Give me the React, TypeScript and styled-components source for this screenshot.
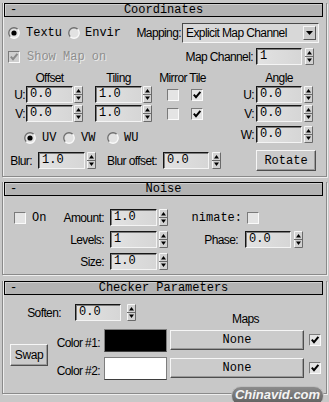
import styled, { createGlobalStyle } from "styled-components";

const GlobalStyle = createGlobalStyle`
  html, body {
    margin: 0;
    padding: 0;
    background: #c8c8c8;
  }
  body {
    width: 329px;
    height: 402px;
    overflow: hidden;
  }
`;

const Page = styled.div`
  position: relative;
  width: 329px;
  height: 402px;
  overflow: hidden;
  background: #c8c8c8;
  color: #000;
  font-family: "Liberation Sans", Arial, sans-serif;
`;

const Rollout = styled.section<{ $mt: number; $pb: number }>`
  width: 325px;
  box-sizing: border-box;
  margin: ${(p) => p.$mt}px 0 0 2px;
  padding-bottom: ${(p) => p.$pb}px;
  border: 1px solid #8a8a8a;
  border-top: none;
  box-shadow: 1px 1px 0 #eeeeee, inset 1px 0 0 #eeeeee;
`;

const Header = styled.div`
  display: flex;
  align-items: center;
  height: 14px;
  box-sizing: border-box;
  margin: 3px 3px 0 1px;
  border: 1px solid #000;
  background: #b3b3b3;
  box-shadow: inset 1px 1px 0 #cfcfcf;
  font-family: "Liberation Mono", monospace;
  font-size: 12px;
  line-height: 12px;
`;

const Minus = styled.span`
  width: 10px;
  padding-left: 5px;
`;

const Title = styled.span`
  flex: 1;
  text-align: center;
  margin-right: 15px;
`;

const Row = styled.div<{ $mt: number; $h: number }>`
  display: flex;
  align-items: center;
  margin-top: ${(p) => p.$mt}px;
  height: ${(p) => p.$h}px;
`;

const Label = styled.span<{ $w?: number; $ml?: number; $align?: string }>`
  flex: none;
  width: ${(p) => (p.$w ? `${p.$w}px` : "auto")};
  margin-left: ${(p) => p.$ml ?? 0}px;
  text-align: ${(p) => p.$align ?? "right"};
  font-size: 12px;
  letter-spacing: -0.6px;
  line-height: 14px;
  white-space: nowrap;
`;

const Mono = styled.span<{ $w?: number; $ml?: number; $off?: boolean; $align?: string }>`
  flex: none;
  width: ${(p) => (p.$w ? `${p.$w}px` : "auto")};
  margin-left: ${(p) => p.$ml ?? 0}px;
  text-align: ${(p) => p.$align ?? "left"};
  font-family: "Liberation Mono", monospace;
  font-size: 12px;
  line-height: 14px;
  white-space: nowrap;
  color: ${(p) => (p.$off ? "#8e8e8e" : "#000")};
  text-shadow: ${(p) => (p.$off ? "1px 1px 0 #ececec" : "none")};
`;

const Field = styled.div<{ $w: number; $ml?: number }>`
  flex: none;
  box-sizing: border-box;
  width: ${(p) => p.$w}px;
  height: 17px;
  margin-left: ${(p) => p.$ml ?? 0}px;
  padding-left: 3px;
  background: linear-gradient(90deg, #e2e2e2, #d6d6d6);
  border-top: 1px solid #161616;
  border-left: 1px solid #161616;
  border-right: 1px solid #f4f4f4;
  border-bottom: 1px solid #f4f4f4;
  box-shadow: inset 1px 1px 0 #7c7c7c;
  font-family: "Liberation Mono", monospace;
  font-size: 12px;
  line-height: 15px;
`;

const SpinBox = styled.span<{ $ml: number }>`
  flex: none;
  display: flex;
  width: 9px;
  height: 17px;
  margin-left: ${(p) => p.$ml}px;
`;

const Dropdown = styled.div<{ $w: number; $ml: number }>`
  flex: none;
  display: flex;
  align-items: center;
  box-sizing: border-box;
  width: ${(p) => p.$w}px;
  height: 20px;
  margin-left: ${(p) => p.$ml}px;
  padding-left: 3px;
  background: #d8d8d8;
  border-top: 1px solid #4a4a4a;
  border-left: 1px solid #4a4a4a;
  border-right: 1px solid #f6f6f6;
  border-bottom: 1px solid #f6f6f6;
  font-size: 12px;
  letter-spacing: -0.6px;
`;

const DropText = styled.span`
  flex: 1;
  white-space: nowrap;
`;

const DropArrow = styled.span`
  display: flex;
  align-items: center;
  justify-content: center;
  box-sizing: border-box;
  width: 13px;
  height: 14px;
  margin-right: 2px;
  background: #cbcbcb;
  border-top: 1px solid #f4f4f4;
  border-left: 1px solid #f4f4f4;
  border-right: 1px solid #555;
  border-bottom: 1px solid #555;
`;

const Box = styled.span<{ $ml: number; $off?: boolean }>`
  flex: none;
  display: flex;
  box-sizing: border-box;
  width: 12px;
  height: 12px;
  margin-left: ${(p) => p.$ml}px;
  background: ${(p) => (p.$off ? "#cfcfcf" : "#e4e4e4")};
  border-top: 1px solid #7a7a7a;
  border-left: 1px solid #7a7a7a;
  border-right: 1px solid #fafafa;
  border-bottom: 1px solid #fafafa;
`;

const RadioMark = styled.span<{ $ml: number }>`
  flex: none;
  display: flex;
  width: 12px;
  height: 12px;
  margin-left: ${(p) => p.$ml}px;
`;

const RadioGroup = styled.div`
  flex: none;
  display: flex;
  align-items: center;
  align-self: flex-end;
  width: 136px;
  height: 14px;
  margin: 0 0 -2px 21px;
`;

const Option = styled.span<{ $w: number }>`
  flex: none;
  display: flex;
  align-items: center;
  width: ${(p) => p.$w}px;
`;

const Button = styled.div<{ $w: number; $h: number; $ml?: number; $sans?: boolean }>`
  flex: none;
  display: flex;
  align-items: center;
  justify-content: center;
  box-sizing: border-box;
  width: ${(p) => p.$w}px;
  height: ${(p) => p.$h}px;
  margin-left: ${(p) => p.$ml ?? 0}px;
  background: #cbcbcb;
  border-top: 1px solid #f6f6f6;
  border-left: 1px solid #f6f6f6;
  border-right: 1px solid #4e4e4e;
  border-bottom: 1px solid #4e4e4e;
  box-shadow: inset -1px -1px 0 #9a9a9a;
  font-family: ${(p) =>
    p.$sans ? `"Liberation Sans", Arial, sans-serif` : `"Liberation Mono", monospace`};
  font-size: 12px;
  letter-spacing: ${(p) => (p.$sans ? "-0.4px" : "0")};
`;

const Columns = styled.div`
  display: flex;
`;

const LeftCol = styled.div`
  flex: none;
  width: 167px;
`;

const RightCol = styled.div`
  flex: none;
  width: 153px;
`;

const ColorBlock = styled.div`
  display: flex;
  align-items: center;
  margin-top: 8px;
`;

const ColorGrid = styled.div`
  display: grid;
  grid-template-columns: 52px 63px;
  column-gap: 4px;
  row-gap: 5px;
`;

const ColorLabel = styled.span`
  align-self: center;
  padding-top: 5px;
  text-align: right;
  font-size: 12px;
  letter-spacing: -0.6px;
  white-space: nowrap;
`;

const Swatch = styled.div<{ $color: string }>`
  box-sizing: border-box;
  height: 23px;
  background: ${(p) => p.$color};
  border: 1px solid #7e7e7e;
  border-bottom-color: #3e3e3e;
`;

const MapsTitle = styled.div`
  margin-top: 19px;
  width: 151px;
  height: 11px;
  text-align: center;
  font-size: 12px;
  letter-spacing: -0.6px;
  line-height: 11px;
`;

const MapRow = styled.div<{ $mt: number }>`
  display: flex;
  align-items: center;
  margin-top: ${(p) => p.$mt}px;
`;

const Watermark = styled.div`
  position: absolute;
  left: 231px;
  top: 386px;
  width: 93px;
  height: 20px;
  box-sizing: border-box;
  padding-bottom: 4px;
  display: flex;
  align-items: center;
  justify-content: center;
  border-radius: 10px;
  border: 1px solid #bdbdbd;
  background: linear-gradient(#8c8c8c, #5c5c5c);
  color: #f4f4f4;
  font-family: "Liberation Sans", Arial, sans-serif;
  font-size: 13px;
  font-style: italic;
  font-weight: bold;
`;

function Spin({ ml }: { ml: number }) {
  return (
    <SpinBox $ml={ml}>
      <svg width="9" height="17" viewBox="0 0 9 17">
        <rect x="0" y="0" width="9" height="17" fill="#d2d2d2" />
        <path d="M0.5 16.5 V0.5 H8.5" stroke="#f6f6f6" fill="none" />
        <path d="M8.5 0.5 V16.5 H0.5" stroke="#6a6a6a" fill="none" />
        <line x1="0" y1="8.5" x2="9" y2="8.5" stroke="#6a6a6a" />
        <polygon points="2,6.5 7,6.5 4.5,3" fill="#000" />
        <polygon points="2,10.5 7,10.5 4.5,14" fill="#000" />
      </svg>
    </SpinBox>
  );
}

function Check({ ml, on, off }: { ml: number; on?: boolean; off?: boolean }) {
  return (
    <Box $ml={ml} $off={off}>
      {on && (
        <svg width="10" height="10" viewBox="0 0 10 10">
          <path
            d="M1.8 4.6 L4 7.2 L8.4 1.8"
            stroke={off ? "#8a8a8a" : "#000"}
            strokeWidth="2"
            fill="none"
          />
        </svg>
      )}
    </Box>
  );
}

function Radio({ ml, on }: { ml: number; on?: boolean }) {
  return (
    <RadioMark $ml={ml}>
      <svg width="12" height="12" viewBox="0 0 12 12">
        <circle cx="6" cy="6" r="5.2" fill="#e2e2e2" />
        <path d="M2.3 9.7 A5.2 5.2 0 0 1 9.7 2.3" stroke="#6e6e6e" strokeWidth="1.3" fill="none" />
        <path d="M9.7 2.3 A5.2 5.2 0 0 1 2.3 9.7" stroke="#fafafa" strokeWidth="1.3" fill="none" />
        {on && <circle cx="6" cy="6" r="2.6" fill="#000" />}
      </svg>
    </RadioMark>
  );
}

export default function App() {
  return (
    <Page>
      <GlobalStyle />

      <Rollout $mt={0} $pb={5}>
        <Header>
          <Minus>-</Minus>
          <Title>Coordinates</Title>
        </Header>

        <Row $mt={6} $h={20}>
          <Radio ml={5} on />
          <Mono $ml={6} $w={36}>Textu</Mono>
          <Radio ml={6} />
          <Mono $ml={5} $w={36}>Envir</Mono>
          <Label $w={49} $ml={11}>Mapping:</Label>
          <Dropdown $w={137} $ml={1}>
            <DropText>Explicit Map Channel</DropText>
            <DropArrow>
              <svg width="7" height="4" viewBox="0 0 7 4">
                <polygon points="0,0 7,0 3.5,4" fill="#000" />
              </svg>
            </DropArrow>
          </Dropdown>
        </Row>

        <Row $mt={5} $h={17}>
          <Check ml={5} on off />
          <Mono $ml={7} $w={80} $off>Show Map on</Mono>
          <Label $w={146}>Map Channel:</Label>
          <Field $w={46} $ml={3}>1</Field>
          <Spin ml={3} />
        </Row>

        <Row $mt={5} $h={15}>
          <Label $w={47} $ml={23} $align="center">Offset</Label>
          <Label $w={47} $ml={22} $align="center">Tiling</Label>
          <Label $w={55} $ml={13} $align="center">Mirror Tile</Label>
          <Label $w={46} $ml={46} $align="center">Angle</Label>
        </Row>

        <Row $mt={1} $h={17}>
          <Label $w={22}>U:</Label>
          <Field $w={47} $ml={1}>0.0</Field>
          <Spin ml={1} />
          <Field $w={47} $ml={12}>1.0</Field>
          <Spin ml={1} />
          <Check ml={15} />
          <Check ml={12} on />
          <Label $w={51}>U:</Label>
          <Field $w={46} $ml={2}>0.0</Field>
          <Spin ml={2} />
        </Row>

        <Row $mt={2} $h={17}>
          <Label $w={22}>V:</Label>
          <Field $w={47} $ml={1}>0.0</Field>
          <Spin ml={1} />
          <Field $w={47} $ml={12}>1.0</Field>
          <Spin ml={1} />
          <Check ml={15} />
          <Check ml={12} on />
          <Label $w={51}>V:</Label>
          <Field $w={46} $ml={2}>0.0</Field>
          <Spin ml={2} />
        </Row>

        <Row $mt={4} $h={17}>
          <RadioGroup>
            <Option $w={39}>
              <Radio ml={0} on />
              <Mono $ml={6}>UV</Mono>
            </Option>
            <Option $w={44}>
              <Radio ml={0} />
              <Mono $ml={6}>VW</Mono>
            </Option>
            <Option $w={53}>
              <Radio ml={0} />
              <Mono $ml={5}>WU</Mono>
            </Option>
          </RadioGroup>
          <Label $w={94}>W:</Label>
          <Field $w={46} $ml={2}>0.0</Field>
          <Spin ml={2} />
        </Row>

        <Row $mt={7} $h={21}>
          <Label $w={29}>Blur:</Label>
          <Field $w={47} $ml={6}>1.0</Field>
          <Spin ml={2} />
          <Label $w={61}>Blur offset:</Label>
          <Field $w={46} $ml={6}>0.0</Field>
          <Spin ml={3} />
          <Button $w={60} $h={21} $ml={35}>Rotate</Button>
        </Row>
      </Rollout>

      <Rollout $mt={5} $pb={4}>
        <Header>
          <Minus>-</Minus>
          <Title>Noise</Title>
        </Header>

        <Row $mt={13} $h={17}>
          <Check ml={11} />
          <Mono $ml={6} $w={28}>On</Mono>
          <Label $w={44}>Amount:</Label>
          <Field $w={47} $ml={6}>1.0</Field>
          <Spin ml={2} />
          <Mono $w={51} $ml={23} $align="right">nimate:</Mono>
          <Check ml={5} />
        </Row>

        <Row $mt={5} $h={17}>
          <Label $w={44} $ml={57}>Levels:</Label>
          <Field $w={47} $ml={6}>1</Field>
          <Spin ml={2} />
          <Label $w={70}>Phase:</Label>
          <Field $w={46} $ml={7}>0.0</Field>
          <Spin ml={3} />
        </Row>

        <Row $mt={5} $h={17}>
          <Label $w={44} $ml={57}>Size:</Label>
          <Field $w={47} $ml={6}>1.0</Field>
          <Spin ml={2} />
        </Row>
      </Rollout>

      <Rollout $mt={6} $pb={13}>
        <Header>
          <Minus>-</Minus>
          <Title>Checker Parameters</Title>
        </Header>

        <Columns>
          <LeftCol>
            <Row $mt={9} $h={17}>
              <Label $w={58}>Soften:</Label>
              <Field $w={46} $ml={14}>0.0</Field>
              <Spin ml={6} />
            </Row>
            <ColorBlock>
              <Button $w={38} $h={22} $ml={7} $sans>Swap</Button>
              <ColorGrid>
                <ColorLabel>Color #1:</ColorLabel>
                <Swatch $color="#000000" />
                <ColorLabel>Color #2:</ColorLabel>
                <Swatch $color="#ffffff" />
              </ColorGrid>
            </ColorBlock>
          </LeftCol>

          <RightCol>
            <MapsTitle>Maps</MapsTitle>
            <MapRow $mt={5}>
              <Button $w={134} $h={20}>None</Button>
              <Check ml={5} on />
            </MapRow>
            <MapRow $mt={8}>
              <Button $w={134} $h={20}>None</Button>
              <Check ml={5} on />
            </MapRow>
          </RightCol>
        </Columns>
      </Rollout>

      <Watermark>Chinavid.com</Watermark>
    </Page>
  );
}
